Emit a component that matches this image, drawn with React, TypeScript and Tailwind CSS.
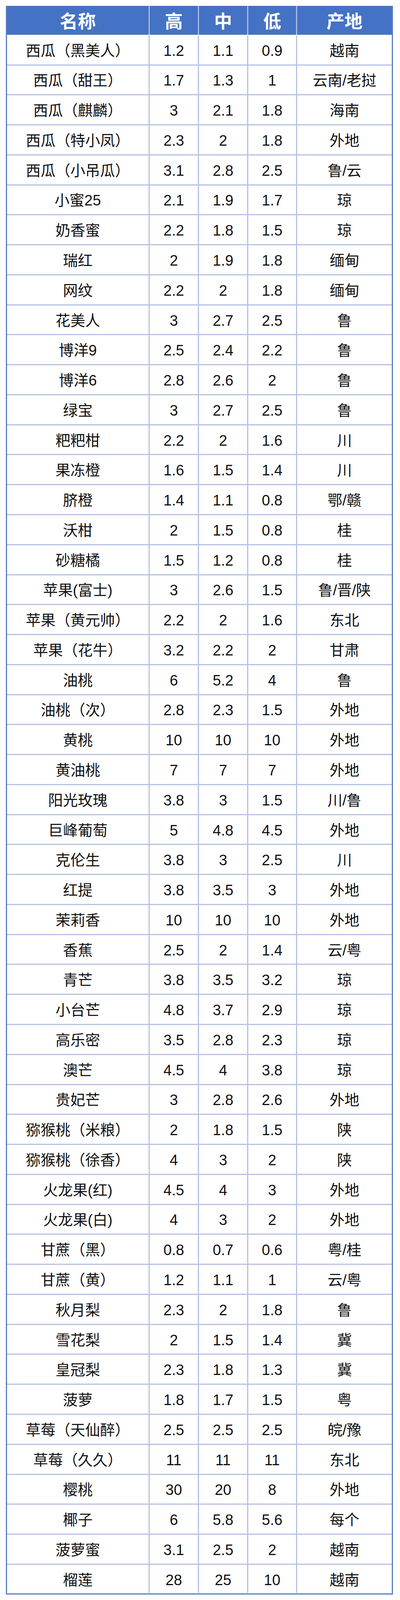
import React from 'react';

type Row = [string, string, string, string, string];

const rows: Row[] = [
  ['西瓜（黑美人）', '1.2', '1.1', '0.9', '越南'],
  ['西瓜（甜王）', '1.7', '1.3', '1', '云南/老挝'],
  ['西瓜（麒麟）', '3', '2.1', '1.8', '海南'],
  ['西瓜（特小凤）', '2.3', '2', '1.8', '外地'],
  ['西瓜（小吊瓜）', '3.1', '2.8', '2.5', '鲁/云'],
  ['小蜜25', '2.1', '1.9', '1.7', '琼'],
  ['奶香蜜', '2.2', '1.8', '1.5', '琼'],
  ['瑞红', '2', '1.9', '1.8', '缅甸'],
  ['网纹', '2.2', '2', '1.8', '缅甸'],
  ['花美人', '3', '2.7', '2.5', '鲁'],
  ['博洋9', '2.5', '2.4', '2.2', '鲁'],
  ['博洋6', '2.8', '2.6', '2', '鲁'],
  ['绿宝', '3', '2.7', '2.5', '鲁'],
  ['粑粑柑', '2.2', '2', '1.6', '川'],
  ['果冻橙', '1.6', '1.5', '1.4', '川'],
  ['脐橙', '1.4', '1.1', '0.8', '鄂/赣'],
  ['沃柑', '2', '1.5', '0.8', '桂'],
  ['砂糖橘', '1.5', '1.2', '0.8', '桂'],
  ['苹果(富士)', '3', '2.6', '1.5', '鲁/晋/陕'],
  ['苹果（黄元帅）', '2.2', '2', '1.6', '东北'],
  ['苹果（花牛）', '3.2', '2.2', '2', '甘肃'],
  ['油桃', '6', '5.2', '4', '鲁'],
  ['油桃（次）', '2.8', '2.3', '1.5', '外地'],
  ['黄桃', '10', '10', '10', '外地'],
  ['黄油桃', '7', '7', '7', '外地'],
  ['阳光玫瑰', '3.8', '3', '1.5', '川/鲁'],
  ['巨峰葡萄', '5', '4.8', '4.5', '外地'],
  ['克伦生', '3.8', '3', '2.5', '川'],
  ['红提', '3.8', '3.5', '3', '外地'],
  ['茉莉香', '10', '10', '10', '外地'],
  ['香蕉', '2.5', '2', '1.4', '云/粤'],
  ['青芒', '3.8', '3.5', '3.2', '琼'],
  ['小台芒', '4.8', '3.7', '2.9', '琼'],
  ['高乐密', '3.5', '2.8', '2.3', '琼'],
  ['澳芒', '4.5', '4', '3.8', '琼'],
  ['贵妃芒', '3', '2.8', '2.6', '外地'],
  ['猕猴桃（米粮）', '2', '1.8', '1.5', '陕'],
  ['猕猴桃（徐香）', '4', '3', '2', '陕'],
  ['火龙果(红)', '4.5', '4', '3', '外地'],
  ['火龙果(白)', '4', '3', '2', '外地'],
  ['甘蔗（黑）', '0.8', '0.7', '0.6', '粤/桂'],
  ['甘蔗（黄）', '1.2', '1.1', '1', '云/粤'],
  ['秋月梨', '2.3', '2', '1.8', '鲁'],
  ['雪花梨', '2', '1.5', '1.4', '冀'],
  ['皇冠梨', '2.3', '1.8', '1.3', '冀'],
  ['菠萝', '1.8', '1.7', '1.5', '粤'],
  ['草莓（天仙醉）', '2.5', '2.5', '2.5', '皖/豫'],
  ['草莓（久久）', '11', '11', '11', '东北'],
  ['樱桃', '30', '20', '8', '外地'],
  ['椰子', '6', '5.8', '5.6', '每个'],
  ['菠萝蜜', '3.1', '2.5', '2', '越南'],
  ['榴莲', '28', '25', '10', '越南'],
];

const headers = ['名称', '高', '中', '低', '产地'];

export default function App() {
  // heights are in vh so the whole sheet fits the window, whatever its exact height
  return (
    <div className="h-screen overflow-hidden bg-white pl-[15px] pt-[0.361vh] font-['Liberation_Sans','Noto_Sans_CJK_SC',sans-serif]">
      <div className="flex h-[99.302vh] w-[990px] flex-col border-x-[3px] border-b-[3px] border-[#5b7bc2]">
        {/* header */}
        <div className="grid h-[1.855vh] shrink-0 grid-cols-[362px_126px_126px_125px_1fr] border-b-2 border-white bg-[#4472c4]">
          {headers.map((h, i) => (
            <div
              key={h}
              className={`flex items-center justify-center pt-[6px] text-[46px] font-bold leading-none text-white ${
                i > 0 ? 'border-l-[3px] border-[#a9bce6]' : ''
              }`}
            >
              {h}
            </div>
          ))}
        </div>

        {/* body: rows share the remaining height evenly */}
        <div className="flex min-h-0 flex-1 flex-col">
          {rows.map((row, r) => (
            <div
              key={row[0]}
              className={`grid min-h-0 flex-1 basis-0 grid-cols-[362px_126px_126px_125px_1fr] overflow-hidden ${
                r < rows.length - 1 ? 'border-b-[3px] border-[#b6c2e4]' : ''
              }`}
            >
              {row.map((cell, i) => (
                <div
                  key={i}
                  className={`flex items-center justify-center pt-[4px] text-[38px] leading-none text-[#111] ${
                    i > 0 ? 'border-l-[3px] border-[#b6c2e4]' : ''
                  }`}
                >
                  {cell}
                </div>
              ))}
            </div>
          ))}
        </div>
      </div>
    </div>
  );
}
